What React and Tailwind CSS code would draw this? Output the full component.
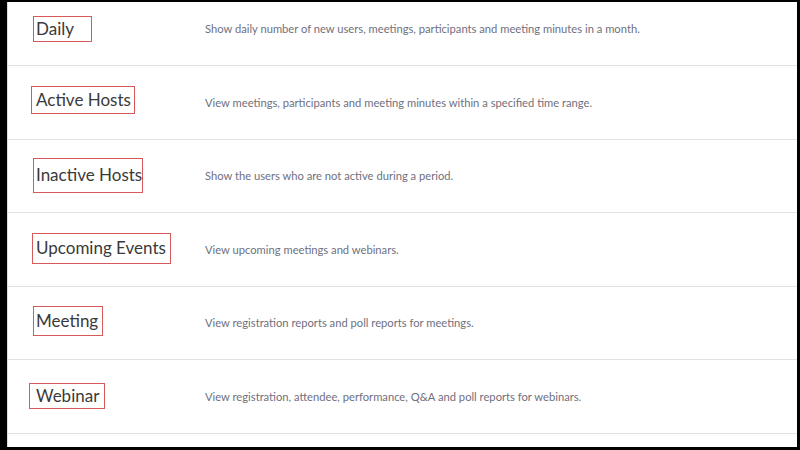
const reports = [
    {
        label: 'Daily',
        desc: 'Show daily number of new users, meetings, participants and meeting minutes in a month.',
        row: 'h-[73px]',
        box: 'ml-[25px] pl-[2px] w-[59px] h-[26px] mb-[0px]',
    },
    {
        label: 'Active Hosts',
        desc: 'View meetings, participants and meeting minutes within a specified time range.',
        row: 'h-[73px]',
        box: 'ml-[23px] pl-[4px] w-[104px] h-[28px] mb-[6px]',
    },
    {
        label: 'Inactive Hosts',
        desc: 'Show the users who are not active during a period.',
        row: 'h-[72px]',
        box: 'ml-[25px] pl-[2px] w-[110px] h-[35px] mb-[2px]',
    },
    {
        label: 'Upcoming Events',
        desc: 'View upcoming meetings and webinars.',
        row: 'h-[73px]',
        box: 'ml-[24px] pl-[3px] w-[139px] h-[31px] mb-[3px]',
    },
    {
        label: 'Meeting',
        desc: 'View registration reports and poll reports for meetings.',
        row: 'h-[72px]',
        box: 'ml-[25px] pl-[2px] w-[70px] h-[30px] mb-[5px]',
    },
    {
        label: 'Webinar',
        desc: 'View registration, attendee, performance, Q&A and poll reports for webinars.',
        row: 'h-[73px]',
        box: 'ml-[21px] pl-[6px] w-[76px] h-[26px] mb-[2px]',
    },
]

export default function App() {
    return (
        <div className="w-[800px] h-[450px] bg-black pt-[2px] pl-[7px] pr-[3px] pb-[3px] font-['Lato','Liberation_Sans',sans-serif]">
            <div className="h-full bg-white border-l border-[#dcdcdc] overflow-hidden">
                <div className="-mt-[10px]">
                    {reports.map((r) => (
                        <div key={r.label} className={`${r.row} box-content flex items-center border-b border-[#e2e2e4]`}>
                            <div className="w-[197px] shrink-0 flex items-center">
                                <div className={`${r.box} flex items-center border border-[#d65a5a] text-[17px] leading-none text-[#3a3a3a] whitespace-nowrap`}>
                                    <span className="-mt-[1px]">{r.label}</span>
                                </div>
                            </div>
                            <p className="text-[11.2px] mt-[1px] text-[#70707e] whitespace-nowrap">{r.desc}</p>
                        </div>
                    ))}
                </div>
            </div>
        </div>
    )
}
